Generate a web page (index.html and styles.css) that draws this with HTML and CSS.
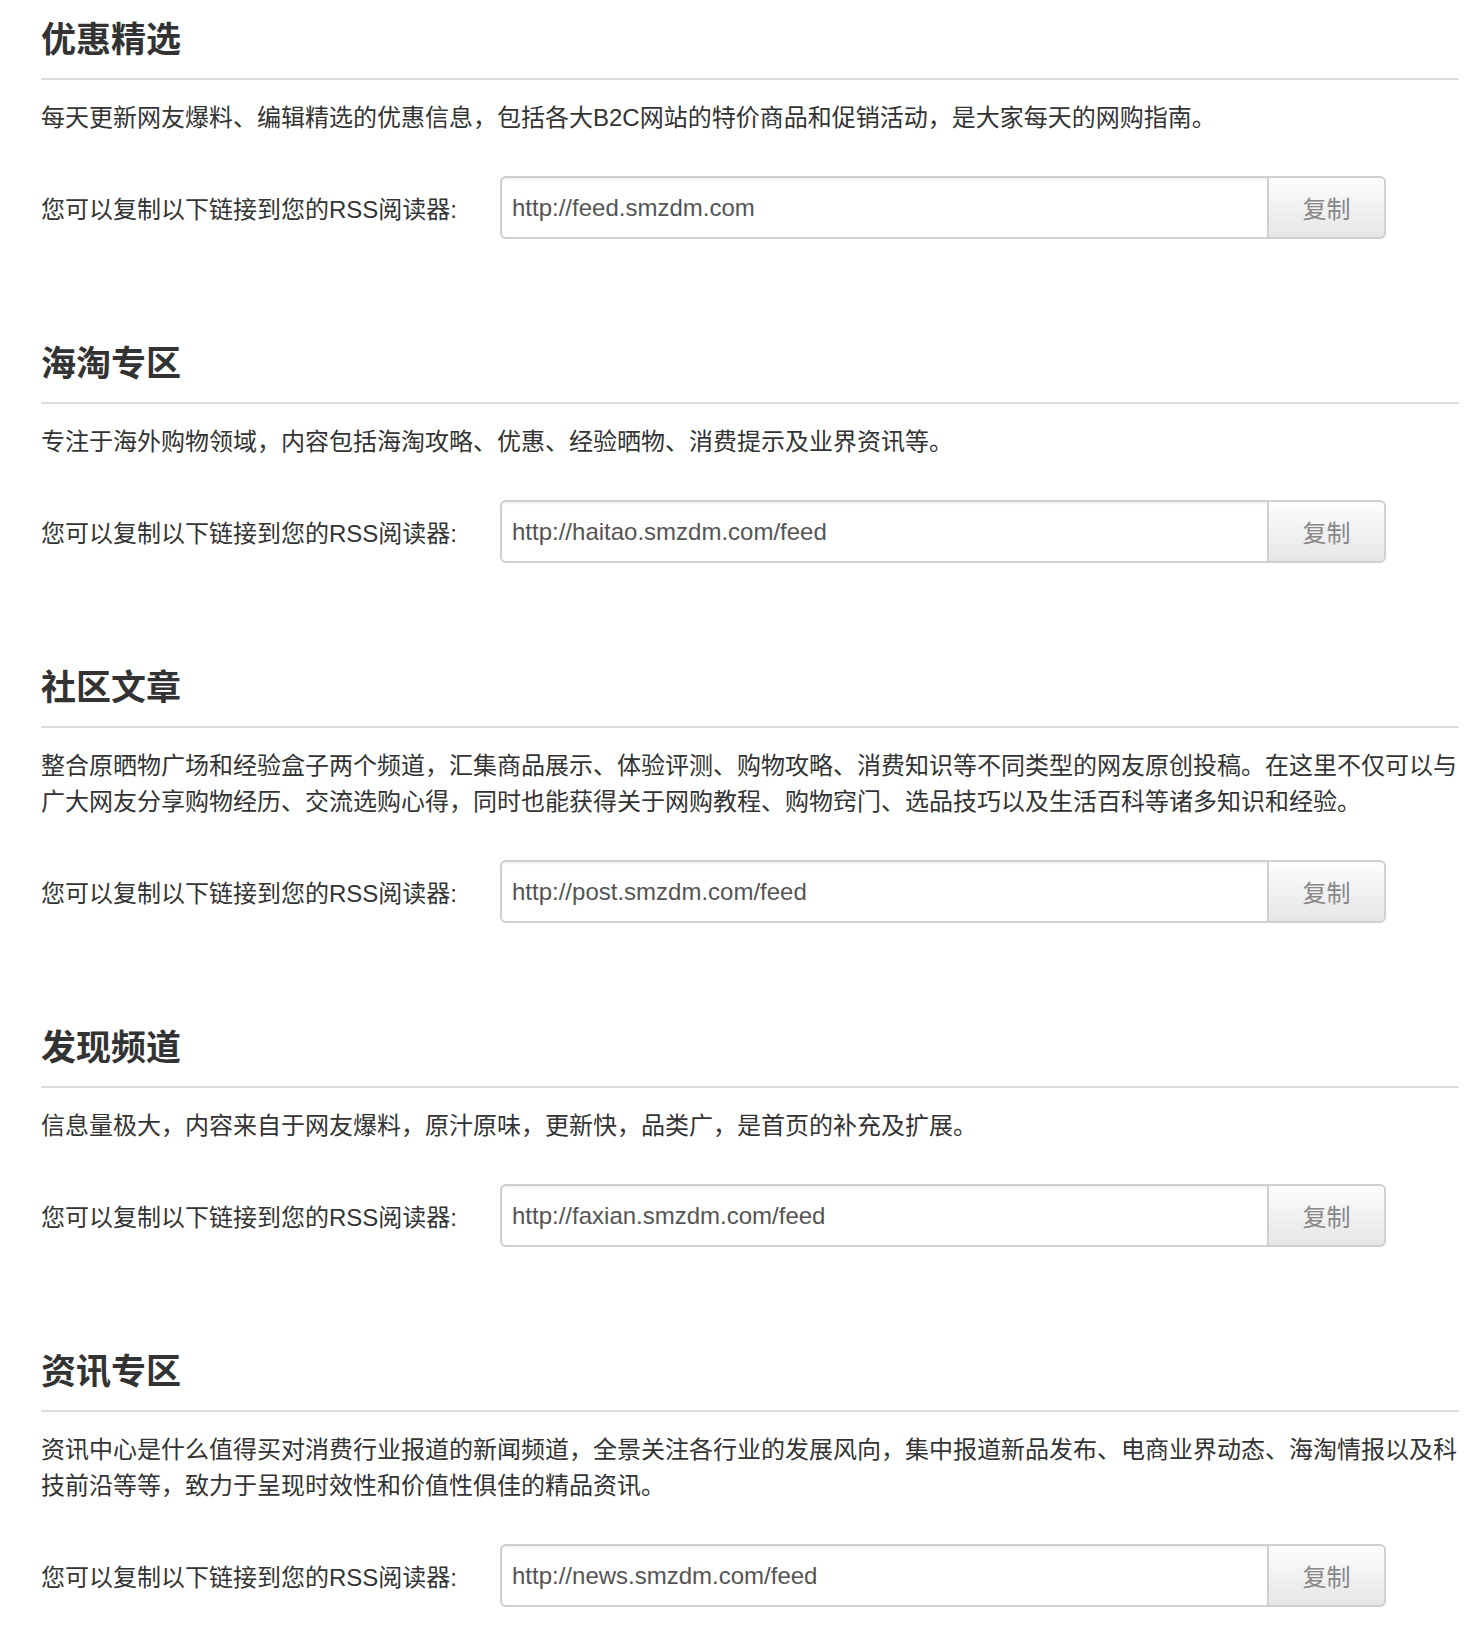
FILE: index.html
```html
<!DOCTYPE html>
<html lang="zh-CN">
<head>
    <meta charset="UTF-8">
    <meta name="viewport" content="width=device-width, initial-scale=1.0">
    <title>RSS订阅</title>
    <link rel="stylesheet" href="styles.css">
</head>
<body>
    <div class="rss-page">
        <div class="rss-section">
            <h2 class="rss-title">优惠精选</h2>
            <p class="rss-desc">每天更新网友爆料、编辑精选的优惠信息，包括各大B2C网站的特价商品和促销活动，是大家每天的网购指南。</p>
            <div class="rss-row">
                <span class="rss-label">您可以复制以下链接到您的RSS阅读器:</span>
                <input class="rss-input" type="text" readonly value="http://feed.smzdm.com">
                <button class="copy-button">复制</button>
            </div>
        </div>

        <div class="rss-section">
            <h2 class="rss-title">海淘专区</h2>
            <p class="rss-desc">专注于海外购物领域，内容包括海淘攻略、优惠、经验晒物、消费提示及业界资讯等。</p>
            <div class="rss-row">
                <span class="rss-label">您可以复制以下链接到您的RSS阅读器:</span>
                <input class="rss-input" type="text" readonly value="http://haitao.smzdm.com/feed">
                <button class="copy-button">复制</button>
            </div>
        </div>

        <div class="rss-section">
            <h2 class="rss-title">社区文章</h2>
            <p class="rss-desc">整合原晒物广场和经验盒子两个频道，汇集商品展示、体验评测、购物攻略、消费知识等不同类型的网友原创投稿。在这里不仅可以与广大网友分享购物经历、交流选购心得，同时也能获得关于网购教程、购物窍门、选品技巧以及生活百科等诸多知识和经验。</p>
            <div class="rss-row">
                <span class="rss-label">您可以复制以下链接到您的RSS阅读器:</span>
                <input class="rss-input" type="text" readonly value="http://post.smzdm.com/feed">
                <button class="copy-button">复制</button>
            </div>
        </div>

        <div class="rss-section">
            <h2 class="rss-title">发现频道</h2>
            <p class="rss-desc">信息量极大，内容来自于网友爆料，原汁原味，更新快，品类广，是首页的补充及扩展。</p>
            <div class="rss-row">
                <span class="rss-label">您可以复制以下链接到您的RSS阅读器:</span>
                <input class="rss-input" type="text" readonly value="http://faxian.smzdm.com/feed">
                <button class="copy-button">复制</button>
            </div>
        </div>

        <div class="rss-section">
            <h2 class="rss-title">资讯专区</h2>
            <p class="rss-desc">资讯中心是什么值得买对消费行业报道的新闻频道，全景关注各行业的发展风向，集中报道新品发布、电商业界动态、海淘情报以及科技前沿等等，致力于呈现时效性和价值性俱佳的精品资讯。</p>
            <div class="rss-row">
                <span class="rss-label">您可以复制以下链接到您的RSS阅读器:</span>
                <input class="rss-input" type="text" readonly value="http://news.smzdm.com/feed">
                <button class="copy-button">复制</button>
            </div>
        </div>
    </div>
</body>
</html>
```

FILE: styles.css
```css
body {
    margin: 0;
    background: #fff;
    color: #333;
    font-family: "Liberation Sans", "Noto Sans CJK SC", sans-serif;
}
.rss-page {
    padding: 18px 23px 0 41px;
}
.rss-section {
    margin-bottom: 103px;
}
.rss-section:last-child {
    margin-bottom: 0;
}
.rss-title {
    margin: 0;
    font-size: 35px;
    line-height: 44px;
    font-weight: bold;
    color: #333;
    padding-bottom: 16px;
    border-bottom: 2px solid #dedede;
}
.rss-desc {
    margin: 20px 0 0;
    font-size: 24px;
    line-height: 36px;
    color: #333;
}
.rss-row {
    display: flex;
    align-items: center;
    margin-top: 40px;
}
.rss-label {
    flex: 0 0 459px;
    font-size: 24px;
    color: #333;
}
.rss-input {
    box-sizing: border-box;
    width: 767px;
    height: 63px;
    margin: 0;
    padding: 0 10px;
    font-family: "Liberation Sans", sans-serif;
    font-size: 24px;
    color: #555;
    border: 2px solid #cfcfcf;
    border-right: none;
    border-radius: 6px 0 0 6px;
    box-shadow: inset 0 2px 2px rgba(0, 0, 0, 0.05);
    outline: none;
}
.copy-button {
    box-sizing: border-box;
    width: 119px;
    height: 63px;
    margin: 0;
    padding: 0;
    font-family: "Liberation Sans", "Noto Sans CJK SC", sans-serif;
    font-size: 24px;
    color: #888;
    background: linear-gradient(#fdfdfd, #e6e6e6);
    border: 2px solid #cfcfcf;
    border-radius: 0 6px 6px 0;
    cursor: pointer;
}
```
